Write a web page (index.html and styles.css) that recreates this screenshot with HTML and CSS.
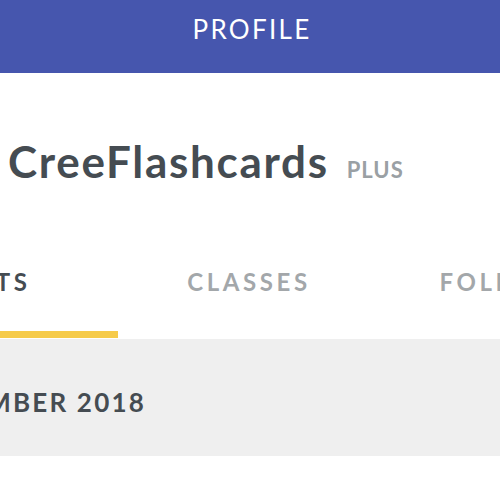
FILE: index.html
```html
<!DOCTYPE html>
<html lang="en">
<head>
<meta charset="utf-8">
<title>Profile</title>
<link rel="stylesheet" href="styles.css">
</head>
<body>
<div class="page">
  <header class="topbar">
    <h1 class="topbar-title">PROFILE</h1>
  </header>
  <section class="account">
    <span class="account-name">CreeFlashcards</span>
    <span class="account-plan">PLUS</span>
  </section>
  <nav class="tabs">
    <div class="tab tab-active"><span class="tab-label">SETS</span></div>
    <div class="tab"><span class="tab-label">CLASSES</span></div>
    <div class="tab"><span class="tab-label">FOLDERS</span></div>
  </nav>
  <section class="group-header">
    <div class="group-title-box">
      <span class="group-title">NOVEMBER 2018</span>
    </div>
  </section>
</div>
</body>
</html>
```
FILE: styles.css
```css
html, body {
  margin: 0;
  padding: 0;
  background: #ffffff;
}
body {
  font-family: Lato, "Liberation Sans", sans-serif;
  width: 500px;
  height: 485px;
  overflow: hidden;
}
.page {
  display: flex;
  flex-direction: column;
  width: 500px;
  overflow: hidden;
}
.topbar {
  height: 73px;
  background: #4656ae;
  display: flex;
  align-items: center;
  justify-content: center;
  padding-bottom: 15px;
  box-sizing: border-box;
}
.topbar-title {
  margin: 0 -2px 0 2px;
  font-weight: 400;
  font-size: 26px;
  letter-spacing: 2.3px;
  color: #ffffff;
  line-height: 1;
}
.account {
  height: 177px;
  display: flex;
  align-items: baseline;
  padding-left: 8px;
  box-sizing: border-box;
}
.account-name {
  margin-top: 66px;
  font-size: 44px;
  font-weight: 700;
  letter-spacing: 1.7px;
  color: #454c52;
  line-height: 1;
}
.account-plan {
  margin-left: 18px;
  font-size: 22px;
  font-weight: 700;
  color: #9aa0a4;
  letter-spacing: 1px;
}
.tabs {
  display: flex;
  margin-left: -138px;
  height: 88px;
}
.tab {
  flex: 0 0 256px;
  display: flex;
  justify-content: center;
  align-items: flex-start;
  padding-top: 20px;
  box-sizing: border-box;
  border-bottom: 7px solid transparent;
}
.tab-active {
  border-bottom-color: #f6cb4a;
}
.tab-label {
  font-size: 24px;
  font-weight: 700;
  letter-spacing: 3.6px;
  color: #a3a7aa;
  line-height: 1;
  margin-right: -6px;
}
.tab-active .tab-label {
  color: #454c52;
  margin-left: 6px;
}
.group-header {
  height: 117px;
  background: #efefef;
  display: flex;
  align-items: center;
  margin-top: 1px;
  padding-top: 9px;
  box-sizing: border-box;
}
.group-title-box {
  width: 146px;
  display: flex;
  justify-content: flex-end;
}
.group-title {
  flex: none;
  white-space: nowrap;
  font-size: 26px;
  font-weight: 700;
  letter-spacing: 2.2px;
  color: #454c52;
  line-height: 1;
}
```
